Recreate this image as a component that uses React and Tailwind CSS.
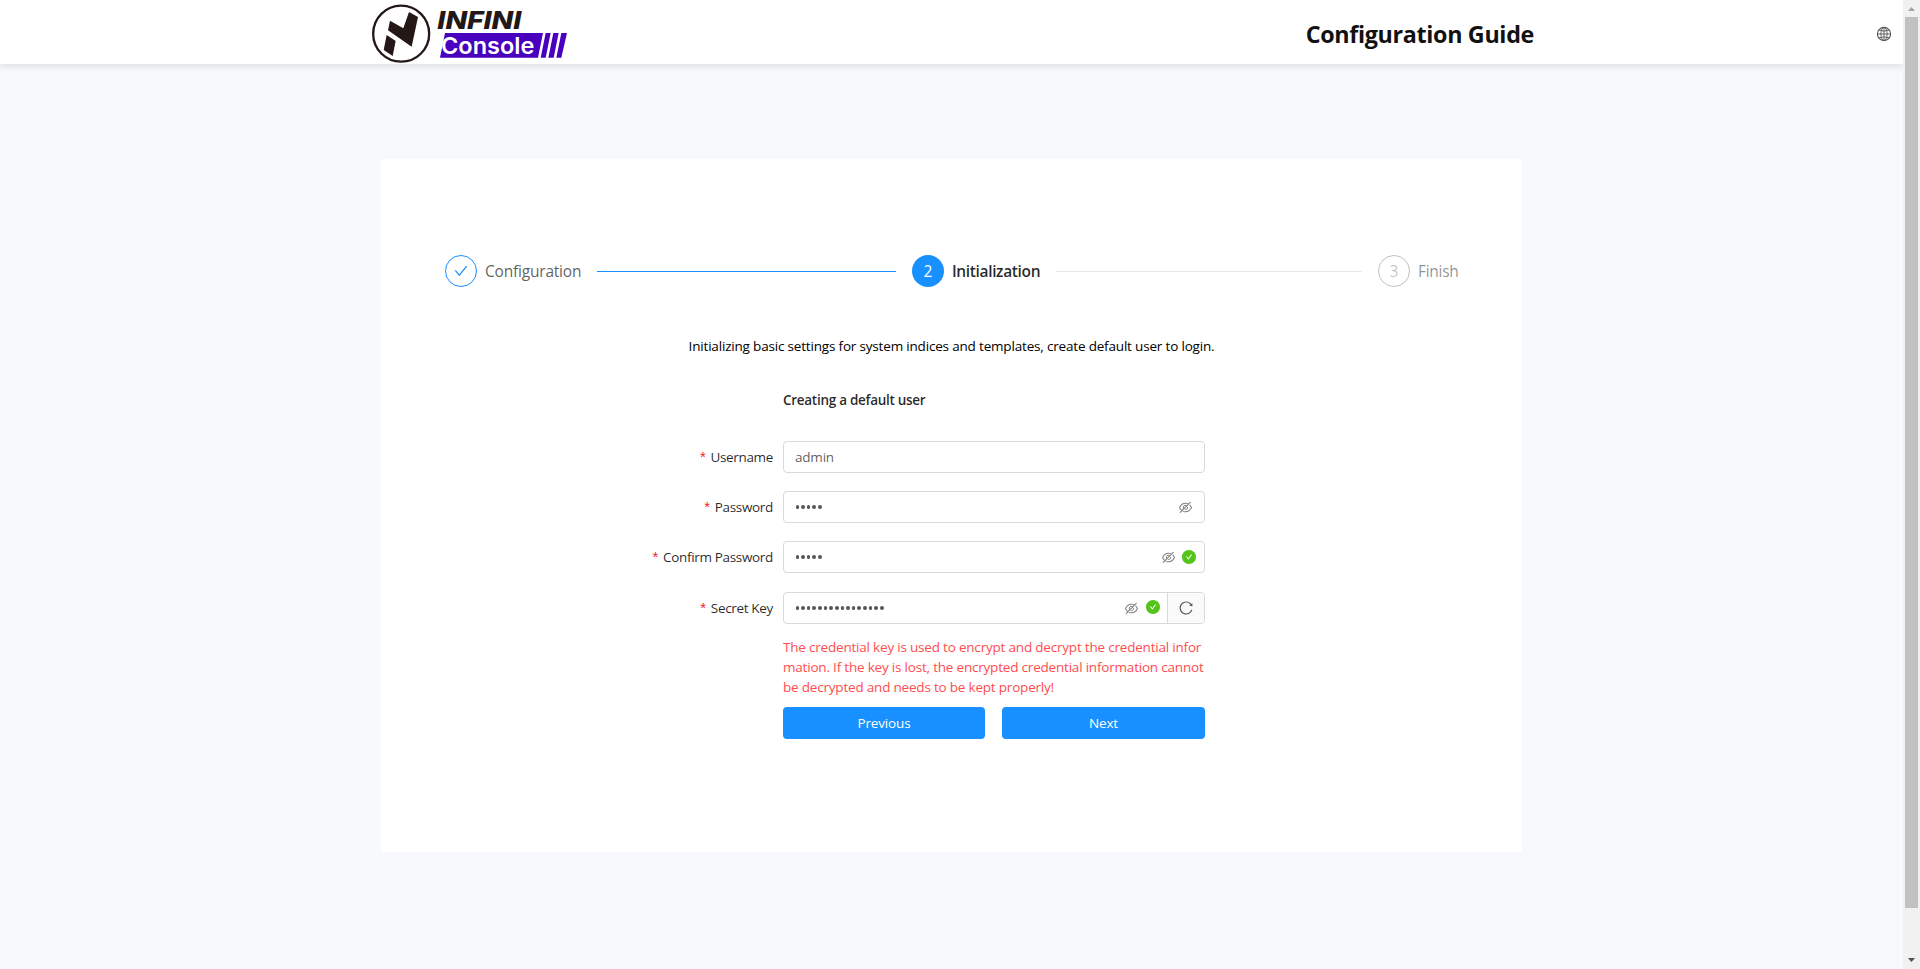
import {
  AiFillCheckCircle,
  AiOutlineCheck,
  AiOutlineEyeInvisible,
  AiOutlineReload,
} from "react-icons/ai";

function Logo() {
  return (
    <div className="flex h-16 items-start">
      <svg className="h-[68px] w-[68px] shrink-0" viewBox="0 0 204 204">
        <circle cx="99.5" cy="101" r="84" fill="none" stroke="#231815" strokeWidth="7" />
        <path d="M123 36L150 51L131 140L60 91L66 62L106 85Z" fill="#231815" />
        <path d="M56 105L83 123L74 168L47 150Z" fill="#231815" />
      </svg>
      <svg className="-ml-0.5 mt-1 h-[60px] w-[136px] shrink-0" viewBox="0 0 408 180">
        <text
          x="10"
          y="76"
          textLength="252"
          lengthAdjust="spacingAndGlyphs"
          className="fill-[#231815] font-['Inter',sans-serif] text-[74px] font-extrabold italic"
        >
          INFINI
        </text>
        <path
          d="M33 87H327L312 161H18ZM335 87H350L335 161H320ZM358 87H374L359 161H343ZM382 87H399L382 161H367Z"
          fill="#4a00bf"
        />
        <text
          x="21"
          y="150"
          textLength="280"
          lengthAdjust="spacingAndGlyphs"
          className="fill-white font-['Inter',sans-serif] text-[70px] font-semibold"
        >
          Console
        </text>
      </svg>
    </div>
  );
}

function Globe() {
  return (
    <svg className="size-4 shrink-0" viewBox="0 0 16 16" fill="none" stroke="#555" strokeWidth="0.9">
      <circle cx="8" cy="8" r="6.6" strokeWidth="1.1" />
      <ellipse cx="8" cy="8" rx="3.1" ry="6.6" />
      <path d="M8 1.4V14.6M1.4 8H14.6M2.9 4Q8 6.4 13.1 4M2.9 12Q8 9.6 13.1 12" />
    </svg>
  );
}

function Header() {
  return (
    <header className="flex h-16 shrink-0 items-center justify-between bg-white pr-[11px] pl-[368px] shadow-[0_2px_8px_rgba(0,0,0,0.12)]">
      <Logo />
      <div className="flex items-center pt-[3px]">
        <h1 className="mr-[342px] text-[23.3px] leading-8 font-bold tracking-[-0.33px] whitespace-nowrap text-[#111]">
          Configuration Guide
        </h1>
        <Globe />
      </div>
    </header>
  );
}

function Steps() {
  return (
    <div className="flex h-8 items-center text-[15.5px] whitespace-nowrap">
      <div className="flex size-8 shrink-0 items-center justify-center rounded-full border border-[#1890ff]">
        <AiOutlineCheck className="size-4 text-[#1890ff]" />
      </div>
      <span className="ml-2 w-[96px] shrink-0 pt-0.5 tracking-[-0.2px] text-black/65">Configuration</span>
      <span className="ml-4 h-px w-[299px] shrink-0 bg-[#1890ff]" />
      <div className="ml-4 flex size-8 shrink-0 items-center justify-center rounded-full bg-[#1890ff] pt-px text-white">
        2
      </div>
      <span className="ml-2 w-[88px] shrink-0 pt-0.5 font-semibold tracking-[-0.36px] text-black/85">
        Initialization
      </span>
      <span className="ml-4 h-px w-[306px] shrink-0 bg-[#e8e8e8]" />
      <div className="ml-4 flex size-8 shrink-0 items-center justify-center rounded-full border border-black/25 pt-px text-black/25">
        3
      </div>
      <span className="ml-2 shrink-0 pt-0.5 tracking-[-0.3px] text-black/45">Finish</span>
    </div>
  );
}

function Label({ children }) {
  return (
    <label className="w-[391px] shrink-0 pr-[10px] text-right tracking-[-0.33px] text-black/85">
      <span className="mr-[5px] font-['Liberation_Sans',sans-serif] text-[15px] leading-4 text-[#f5222d]">*</span>
      {children}
    </label>
  );
}

function Dots({ count }) {
  return (
    <span className="ml-[0.5px] flex gap-[1.95px]">
      {Array.from({ length: count }, (_, i) => (
        <i key={i} className="size-[3.7px] rounded-full bg-[#555]" />
      ))}
    </span>
  );
}

function Eye() {
  return <AiOutlineEyeInvisible className="size-[15px] text-black/50" />;
}

function Valid() {
  return <AiFillCheckCircle className="size-4 text-[#52c41a]" />;
}

function Field({ label, children, addon }) {
  return (
    <div className="flex h-8 items-center">
      <Label>{label}</Label>
      <div className="flex h-8 w-[422px] overflow-hidden rounded border border-[#d9d9d9] bg-white">
        <div className="flex flex-1 items-center pl-[11px] text-black/65">{children}</div>
        {addon}
      </div>
    </div>
  );
}

function Form() {
  return (
    <div className="flex flex-col">
      <Field label="Username">
        <span className="tracking-[-0.2px]">admin</span>
      </Field>
      <div className="mt-[18px]">
        <Field label="Password">
          <Dots count={5} />
          <span className="mr-[11px] ml-auto">
            <Eye />
          </span>
        </Field>
      </div>
      <div className="mt-[18px]">
        <Field label="Confirm Password">
          <Dots count={5} />
          <span className="mr-[7px] ml-auto flex items-center gap-[5px]">
            <Eye />
            <Valid />
          </span>
        </Field>
      </div>
      <div className="mt-[19px]">
        <Field
          label="Secret Key"
          addon={
            <div className="flex w-[37px] items-center justify-center border-l border-[#d9d9d9] bg-[#fafafa]">
              <AiOutlineReload className="size-4 text-black/65" />
            </div>
          }
        >
          <Dots count={16} />
          <span className="mr-[6px] ml-auto flex items-center gap-[6px]">
            <Eye />
            <span className="-mt-0.5">
              <Valid />
            </span>
          </span>
        </Field>
      </div>
    </div>
  );
}

function Scrollbar() {
  return (
    <div className="flex h-full w-[17px] shrink-0 flex-col items-center justify-between bg-[#f1f1f1]">
      <svg className="h-[17px] w-[17px]" viewBox="0 0 17 17">
        <path d="M5 11L8.5 7L12 11Z" fill="#a3a3a3" />
      </svg>
      <div className="mb-auto h-[891px] w-[13px] bg-[#c1c1c1]" />
      <svg className="h-[17px] w-[17px]" viewBox="0 0 17 17">
        <path d="M5 6L8.5 10L12 6Z" fill="#505050" />
      </svg>
    </div>
  );
}

export default function App() {
  return (
    <div className="flex h-[969px] w-[1920px] overflow-hidden font-['Open_Sans',sans-serif] text-[13.5px]">
      <div className="flex h-full flex-1 flex-col bg-[#f7f9fd]">
        <Header />
        <main className="mx-auto mt-[95px] h-[693px] w-[1141px] bg-white px-16 pt-24">
          <Steps />
          <p className="mt-12 text-center leading-[22px] tracking-[-0.18px] text-black">
            Initializing basic settings for system indices and templates, create default user to login.
          </p>
          <h2 className="mt-8 ml-[338px] leading-[22px] font-semibold tracking-[-0.28px] text-black/85">
            Creating a default user
          </h2>
          <div className="mt-[30px] -ml-[53px]">
            <Form />
          </div>
          <div className="mt-[13px] ml-[338px] w-[422px]">
            <p className="leading-5 tracking-[-0.2px] whitespace-nowrap text-[#ff4d4f]">
              The credential key is used to encrypt and decrypt the credential infor
              <br />
              mation. If the key is lost, the encrypted credential information cannot
              <br />
              be decrypted and needs to be kept properly!
            </p>
            <div className="mt-[10px] flex gap-[17px] tracking-[-0.15px] text-white">
              <button className="h-8 w-[202px] rounded bg-[#1890ff]">Previous</button>
              <button className="h-8 w-[203px] rounded bg-[#1890ff]">Next</button>
            </div>
          </div>
        </main>
      </div>
      <Scrollbar />
    </div>
  );
}
